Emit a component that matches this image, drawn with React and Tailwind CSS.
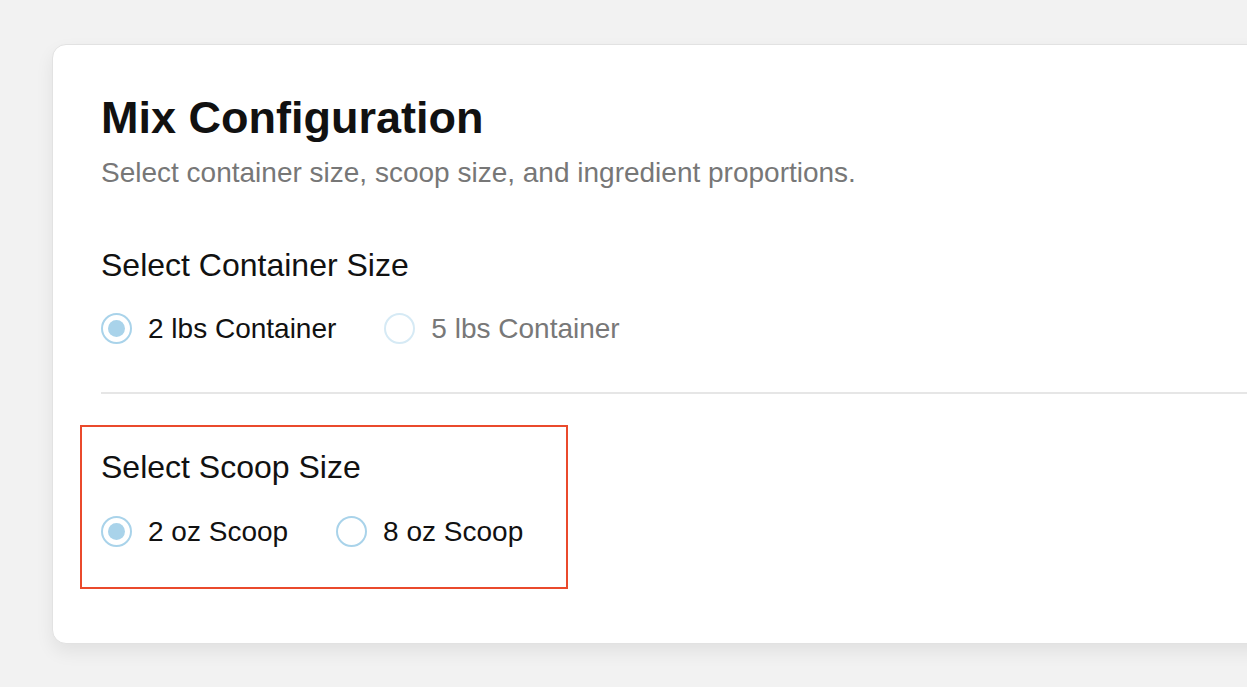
import React, { useState } from "react";

const Radio = ({ label, checked, disabled, onSelect }) => {
    return (
        <button
            type="button"
            onClick={() => !disabled && onSelect()}
            className={`flex items-center gap-[16px] ${disabled ? "cursor-not-allowed" : "cursor-pointer"}`}
        >
            <span
                className={`w-[31px] h-[31px] rounded-full border-2 flex items-center justify-center ${
                    disabled ? "border-[#d6eaf5]" : "border-[#a9d3ea]"
                }`}
            >
                {checked && <span className="w-[17px] h-[17px] rounded-full bg-[#a9d3ea]" />}
            </span>
            <span className={`text-[28px] leading-[31px] ${disabled ? "text-[#787878]" : "text-[#111111]"}`}>
                {label}
            </span>
        </button>
    );
};

const App = () => {
    const [container, setContainer] = useState("2");
    const [scoop, setScoop] = useState("2");

    return (
        <div
            className="min-h-screen h-[687px] overflow-hidden bg-[#f2f2f2] pt-[44px] pl-[52px]"
            style={{ fontFamily: '"Liberation Sans", Arial, sans-serif' }}
        >
            <div className="relative w-[1260px] bg-white rounded-[14px] border border-[#e2e2e2] shadow-[0_8px_18px_rgba(0,0,0,0.07)] pl-[48px] pt-[46px] pb-[96px]">
                <h1 className="text-[45px] leading-[54px] font-bold text-[#111111]">
                    Mix Configuration
                </h1>
                <p className="mt-[7px] text-[28px] leading-[42px] text-[#777777]">
                    Select container size, scoop size, and ingredient proportions.
                </p>

                <div className="mt-[47px]">
                    <h2 className="text-[32px] leading-[48px] text-[#111111]">Select Container Size</h2>
                    <div className="mt-[24px] flex items-center gap-[48px]">
                        <Radio
                            label="2 lbs Container"
                            checked={container === "2"}
                            onSelect={() => setContainer("2")}
                        />
                        <Radio label="5 lbs Container" disabled checked={container === "5"} />
                    </div>
                </div>

                <div className="mt-[48px] h-[2px] bg-[#e6e6e6]" />

                <div className="relative mt-[49px]">
                    <div className="absolute -left-[21px] -top-[18px] w-[488px] h-[164px] border-2 border-[#ea4a2c] pointer-events-none" />
                    <h2 className="text-[32px] leading-[48px] text-[#111111]">Select Scoop Size</h2>
                    <div className="mt-[25px] flex items-center gap-[48px]">
                        <Radio label="2 oz Scoop" checked={scoop === "2"} onSelect={() => setScoop("2")} />
                        <Radio label="8 oz Scoop" checked={scoop === "8"} onSelect={() => setScoop("8")} />
                    </div>
                </div>
            </div>
        </div>
    );
};

export default App;
